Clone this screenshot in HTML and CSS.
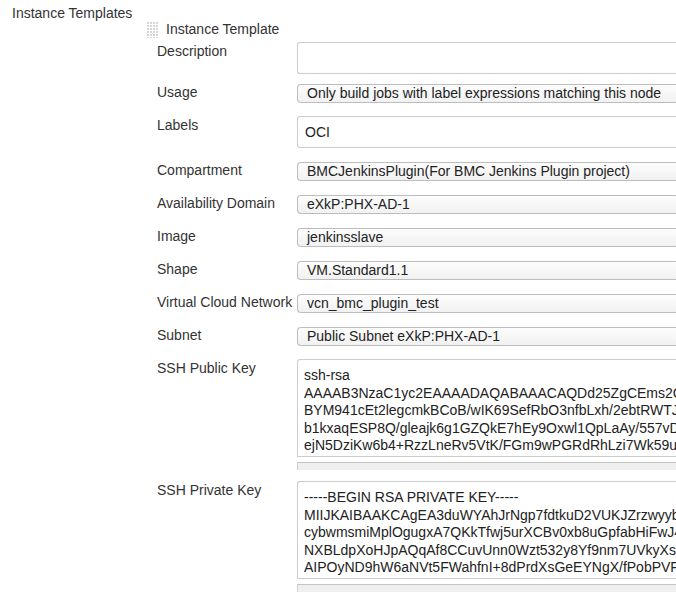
FILE: index.html
```html
<!DOCTYPE html>
<html>
<head>
<meta charset="utf-8">
<link rel="stylesheet" href="styles.css">
</head>
<body>
<div class="form">
  <div class="top-label">Instance Templates</div>
  <div class="chunk">
    <div class="chunk-head">
      <svg class="grip" width="11" height="16" viewBox="0 0 11 16">
        <defs>
          <pattern id="dots" width="3" height="3" patternUnits="userSpaceOnUse">
            <rect x="0" y="0" width="2" height="2" fill="#d6d6d6"/>
          </pattern>
        </defs>
        <rect x="0" y="0" width="11" height="16" fill="url(#dots)"/>
      </svg>
      <span class="chunk-title">Instance Template</span>
    </div>

    <div class="row r-desc"><div class="lbl">Description</div><div class="field"><div class="input"></div></div></div>
    <div class="row r-usage"><div class="lbl">Usage</div><div class="field"><div class="select">Only build jobs with label expressions matching this node</div></div></div>
    <div class="row r-labels"><div class="lbl">Labels</div><div class="field"><div class="input">OCI</div></div></div>
    <div class="row r-sel1"><div class="lbl">Compartment</div><div class="field"><div class="select">BMCJenkinsPlugin(For BMC Jenkins Plugin project)</div></div></div>
    <div class="row r-sel"><div class="lbl">Availability Domain</div><div class="field"><div class="select">eXkP:PHX-AD-1</div></div></div>
    <div class="row r-sel"><div class="lbl">Image</div><div class="field"><div class="select">jenkinsslave</div></div></div>
    <div class="row r-sel"><div class="lbl">Shape</div><div class="field"><div class="select">VM.Standard1.1</div></div></div>
    <div class="row r-sel"><div class="lbl">Virtual Cloud Network</div><div class="field"><div class="select">vcn_bmc_plugin_test</div></div></div>
    <div class="row r-sel"><div class="lbl">Subnet</div><div class="field"><div class="select">Public Subnet eXkP:PHX-AD-1</div></div></div>
    <div class="row r-pub"><div class="lbl">SSH Public Key</div><div class="field"><div class="textarea">ssh-rsa
AAAAB3NzaC1yc2EAAAADAQABAAACAQDd25ZgCEms2C
BYM941cEt2legcmkBCoB/wIK69SefRbO3nfbLxh/2ebtRWTJ
b1kxaqESP8Q/gleajk6g1GZQkE7hEy9Oxwl1QpLaAy/557vD
ejN5DziKw6b4+RzzLneRv5VtK/FGm9wPGRdRhLzi7Wk59u</div><div class="grow-bar"></div></div></div>
    <div class="row r-priv"><div class="lbl">SSH Private Key</div><div class="field"><div class="textarea">-----BEGIN RSA PRIVATE KEY-----
MIIJKAIBAAKCAgEA3duWYAhJrNgp7fdtkuD2VUKJZrzwyyb
cybwmsmiMplOgugxA7QKkTfwj5urXCBv0xb8uGpfabHiFwJ4
NXBLdpXoHJpAQqAf8CCuvUnn0Wzt532y8Yf9nm7UVkyXs
AIPOyND9hW6aNVt5FWahfnI+8dPrdXsGeEYNgX/fPobPVF</div><div class="grow-bar"></div></div></div>
  </div>
</div>
</body>
</html>
```

FILE: styles.css
```css
html, body {
  margin: 0;
  padding: 0;
  overflow: hidden;
  background: #ffffff;
}

body {
  font-family: "Liberation Sans", Arial, Helvetica, sans-serif;
  font-size: 14px;
  color: #333333;
  width: 676px;
  height: 593px;
}

.form {
  display: flex;
  padding-top: 5px;
}

.top-label {
  width: 147px;
  flex: none;
  padding-left: 12px;
  box-sizing: border-box;
  line-height: 16px;
  white-space: nowrap;
}

.chunk {
  display: flex;
  flex-direction: column;
  padding-top: 16px;
  flex: none;
}

.chunk-head {
  display: flex;
  align-items: flex-start;
  gap: 8px;
  height: 16px;
  line-height: 16px;
}

.grip {
  display: block;
  margin-top: 1px;
}

.chunk-title {
  white-space: nowrap;
}

.row {
  display: flex;
  margin-left: 10px;
}

.lbl {
  width: 140px;
  flex: none;
  white-space: nowrap;
  line-height: 16px;
  padding-top: 1px;
}

.field {
  width: 379px;
  flex: none;
}

.r-desc { margin-top: 5px; }
.r-usage { margin-top: 10px; }
.r-usage .lbl { padding-top: 0; }
.r-labels { margin-top: 13px; }
.r-sel1 { margin-top: 14px; }
.r-sel { margin-top: 14px; }
.r-sel1 .lbl, .r-sel .lbl { padding-top: 0; }
.r-pub { margin-top: 13px; }
.r-priv { margin-top: 11px; }

.input {
  box-sizing: border-box;
  height: 32px;
  border: 1px solid #cccccc;
  border-right: none;
  border-radius: 3px 0 0 3px;
  background: #ffffff;
  padding: 0 7px;
  line-height: 30px;
  color: #222222;
  white-space: nowrap;
}

.select {
  box-sizing: border-box;
  height: 19px;
  border: 1px solid #bdbdbd;
  border-right: none;
  border-radius: 4px 0 0 4px;
  background: linear-gradient(#fdfdfd, #f1f1f1);
  padding: 0 9px;
  line-height: 17px;
  color: #222222;
  white-space: nowrap;
  overflow: hidden;
}

.textarea {
  box-sizing: border-box;
  height: 98px;
  border: 1px solid #cccccc;
  border-right: none;
  border-radius: 3px 0 0 0;
  background: #ffffff;
  padding: 7px 0 0 6px;
  line-height: 17.5px;
  color: #222222;
  white-space: pre;
  overflow: hidden;
}

.grow-bar {
  margin-top: 5px;
  height: 8px;
  box-sizing: border-box;
  background: #efefef;
  border-top: 1px solid #c4c4c4;
  border-left: 1px solid #d0d0d0;
}
```
